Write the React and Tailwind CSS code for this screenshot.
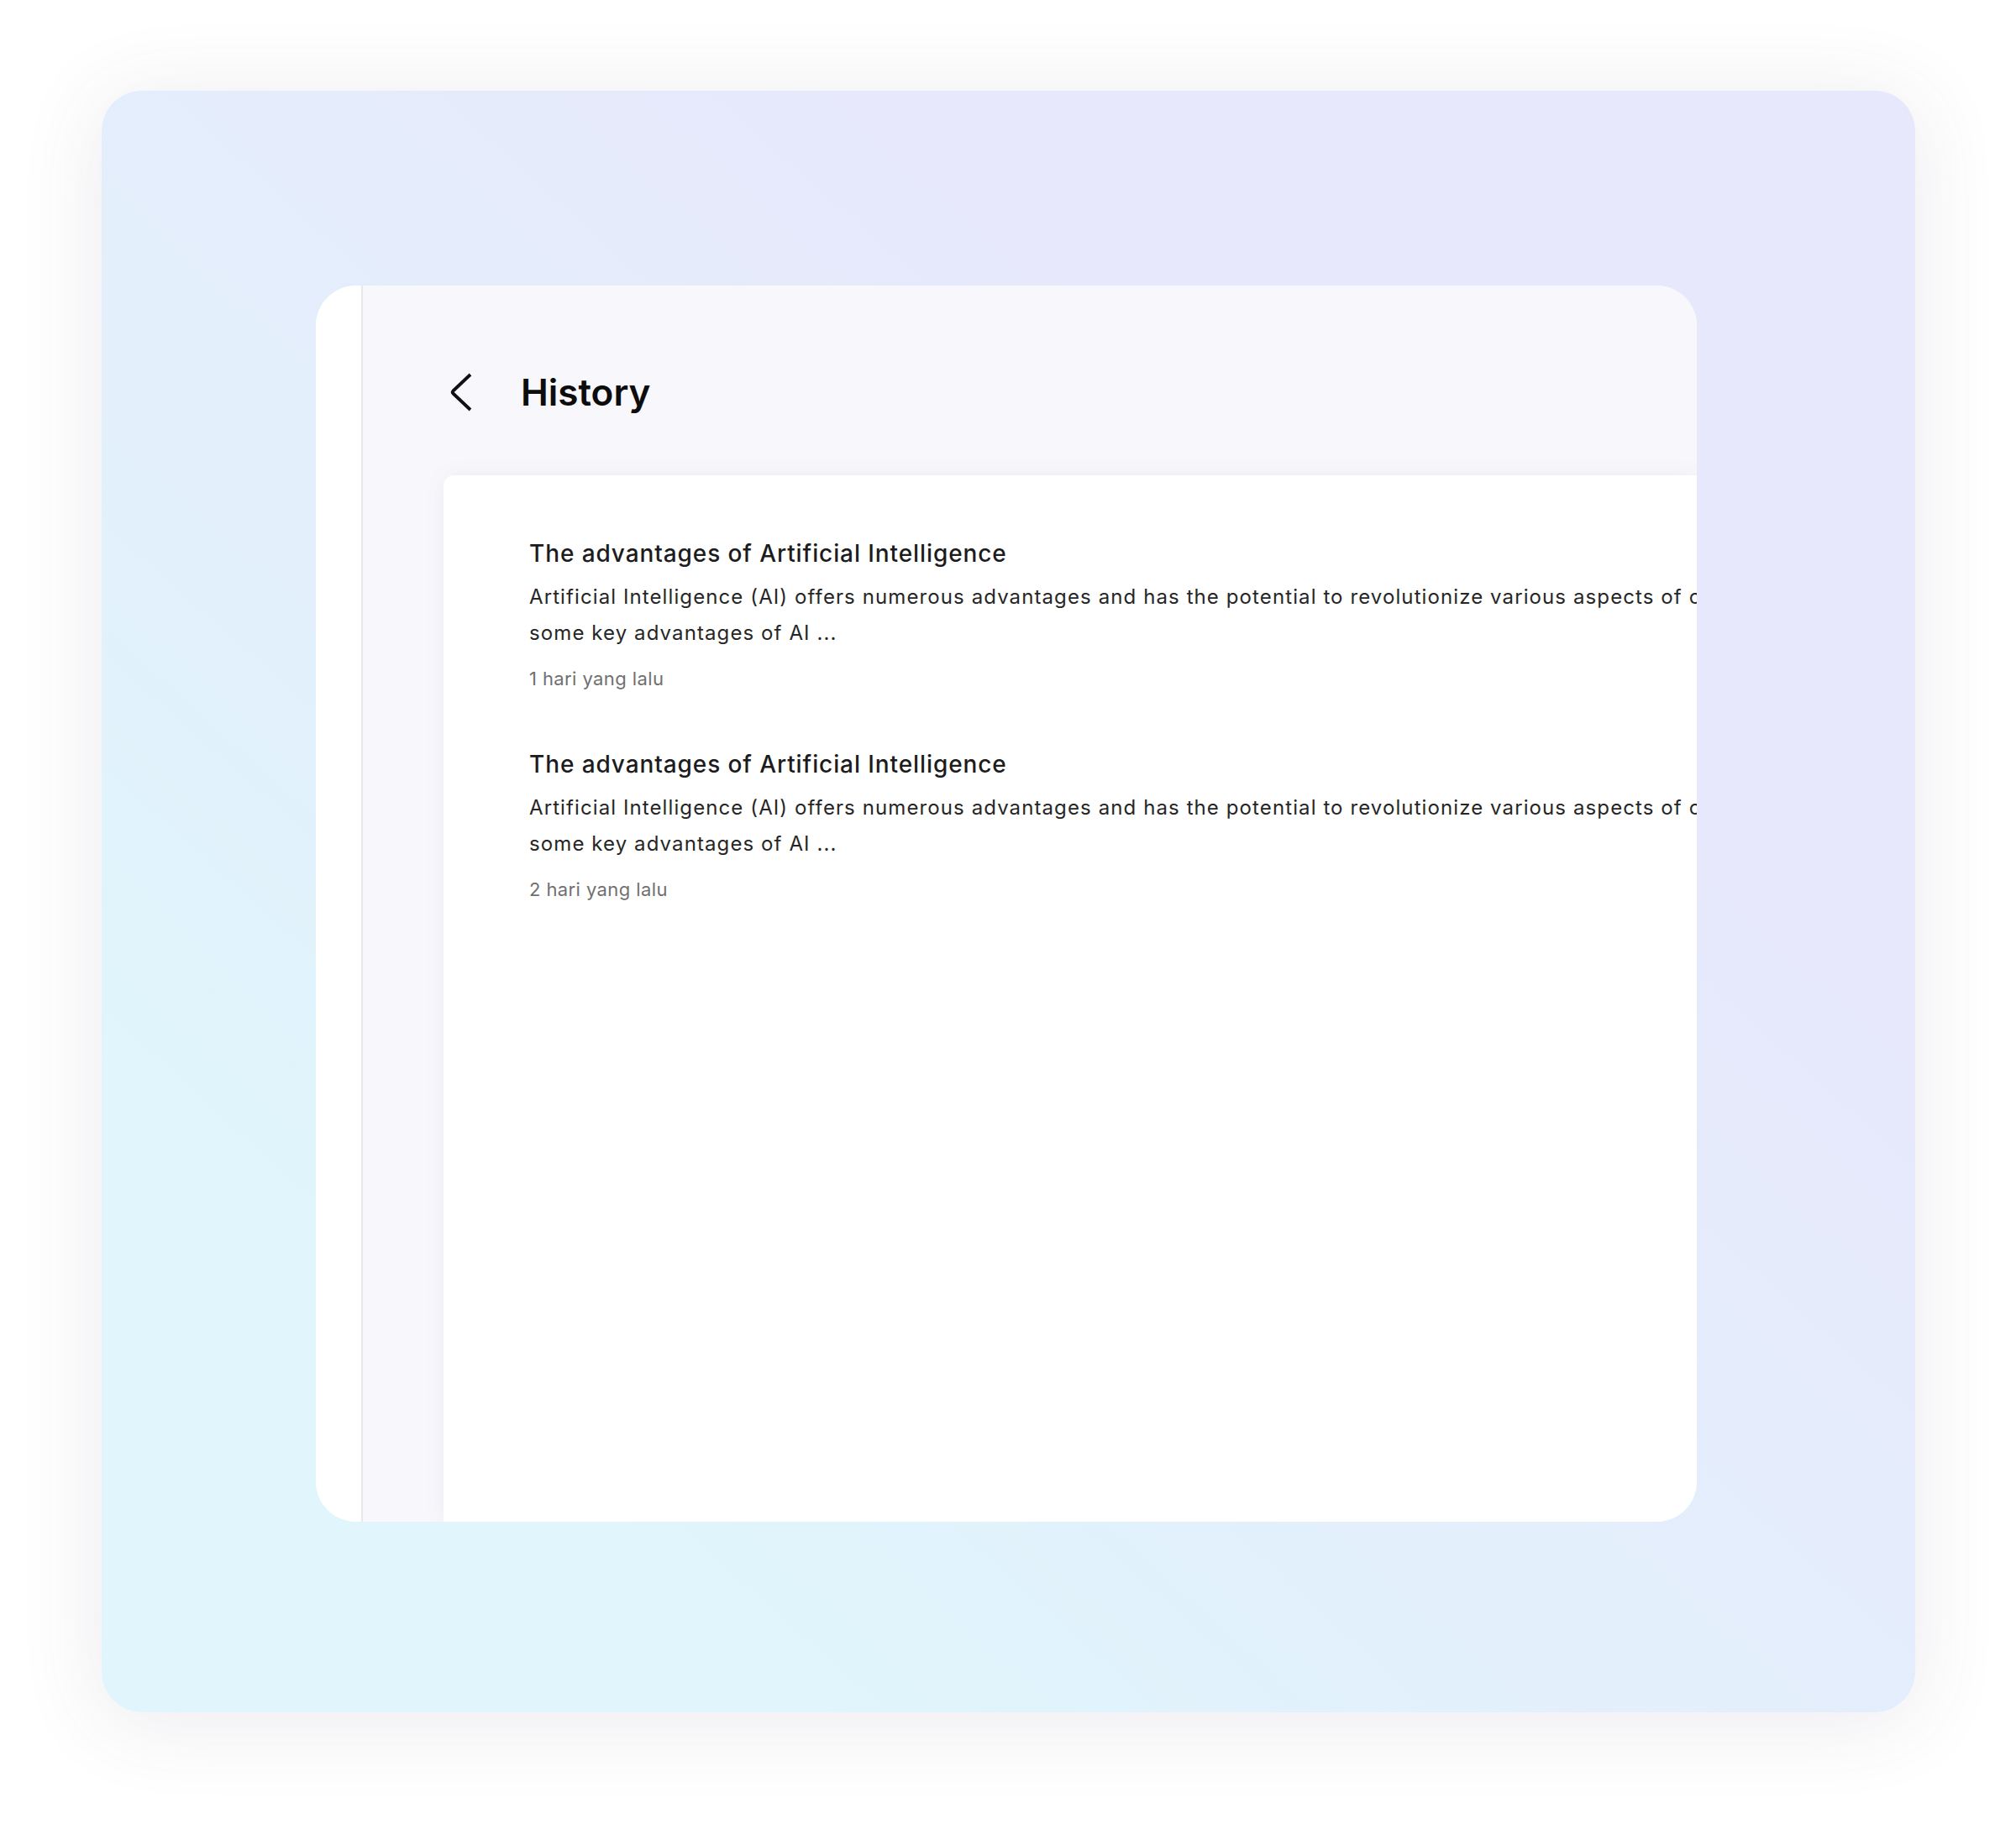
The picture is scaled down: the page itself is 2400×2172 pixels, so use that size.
import React from "react";

const items = [
  { title: "The advantages of Artificial Intelligence", time: "1 hari yang lalu" },
  { title: "The advantages of Artificial Intelligence", time: "2 hari yang lalu" },
];

function HistoryItem({ title, time }) {
  return (
    <div className="flex flex-col">
      <div className="text-[28px] leading-[36px] font-medium tracking-[0.9px] text-[#1c1c1e] whitespace-nowrap">{title}</div>
      <div className="mt-[12px] text-[24px] leading-[43px] tracking-[1.1px] text-[#262626] whitespace-nowrap">
        Artificial Intelligence (AI) offers numerous advantages and has the potential to revolutionize various aspects of our lives. Here are
        <br />
        some key advantages of AI ...
      </div>
      <div className="mt-[18px] text-[22px] leading-[30px] tracking-[0.4px] text-[#707070] whitespace-nowrap">{time}</div>
    </div>
  );
}

export default function App() {
  return (
    <div
      className="w-[2400px] h-[2172px] bg-white pt-[108px] pl-[121px] overflow-hidden"
      style={{ fontFamily: "Inter, 'Noto Sans', sans-serif" }}
    >
      <div className="w-[2159px] h-[1931px] rounded-[48px] bg-[linear-gradient(to_top_right,#e0f5fc_20%,#e7e8fb_72%)] shadow-[0_10px_100px_rgba(100,70,110,0.12)] pt-[232px] pl-[255px]">
        <div className="w-[1644px] h-[1472px] rounded-[48px] overflow-hidden flex bg-white">
          <div className="w-[56px] shrink-0 bg-white border-r-2 border-[#e8e8ec]" />
          <div className="flex-1 bg-[#f8f8fc] flex flex-col min-w-0">
            <div className="h-[46px] mt-[104px] pl-[104px] flex items-center">
              <svg width="26" height="46" viewBox="0 0 26 46" fill="none" className="shrink-0">
                <path d="M24 2 L3.4 21.5 Q2 23 3.4 24.5 L24 44" stroke="#111" strokeWidth="3.8" strokeLinejoin="round" />
              </svg>
              <div className="ml-[58px] text-[44px] leading-[46px] font-semibold text-[#0d0d0d]">History</div>
            </div>
            <div className="mt-[76px] ml-[96px] flex-1 bg-white rounded-tl-[12px] shadow-[0_0_24px_rgba(60,60,120,0.07)] pt-[75px] pl-[102px] overflow-hidden">
              <div className="flex flex-col gap-[69px]">
                {items.map((it, i) => (
                  <HistoryItem key={i} {...it} />
                ))}
              </div>
            </div>
          </div>
        </div>
      </div>
    </div>
  );
}
